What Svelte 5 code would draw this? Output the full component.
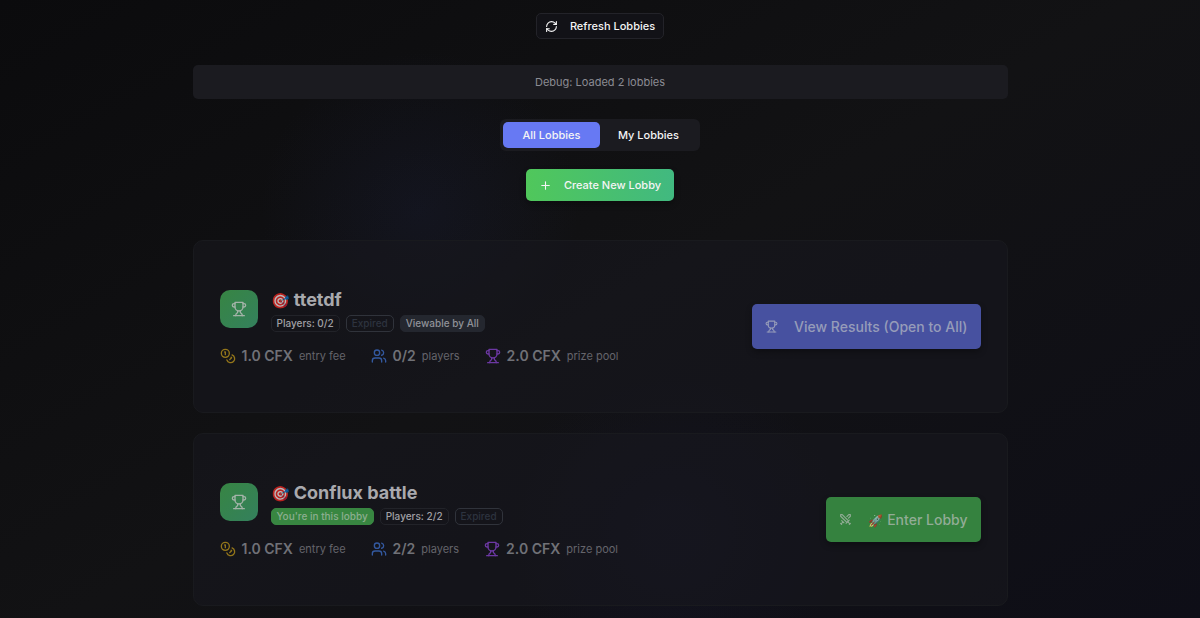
<script>
    let tab = 'all';

    const lobbies = [
        {
            name: 'ttetdf',
            players: '0/2',
            joined: false,
            viewable: true,
            fee: '1.0',
            prize: '2.0',
        },
        {
            name: 'Conflux battle',
            players: '2/2',
            joined: true,
            viewable: false,
            fee: '1.0',
            prize: '2.0',
        },
    ];

    $: shown = tab == 'all' ? lobbies : lobbies.filter((lobby) => lobby.joined);
</script>

<svelte:head>
    <title>Lobbies</title>
</svelte:head>

{#snippet trophy()}
    <svg class="icon" viewBox="0 0 24 24" aria-hidden="true">
        <path d="M6 9H4.500a2.500 2.500 0 0 1 0-5H6" />
        <path d="M18 9h1.500a2.500 2.500 0 0 0 0-5H18" />
        <path d="M4 22h16" />
        <path d="M10 14.660V17c0 .55-.47.98-.97 1.210C7.850 18.750 7 20.240 7 22" />
        <path d="M14 14.660V17c0 .55.47.98.97 1.210C16.150 18.750 17 20.240 17 22" />
        <path d="M18 2H6v7a6 6 0 0 0 12 0V2Z" />
    </svg>
{/snippet}

<main>
    <button class="btn refresh">
        <svg class="icon" viewBox="0 0 24 24" aria-hidden="true">
            <path d="M3 12a9 9 0 0 1 9-9 9.750 9.750 0 0 1 6.740 2.740L21 8" />
            <path d="M21 3v5h-5" />
            <path d="M21 12a9 9 0 0 1-9 9 9.750 9.750 0 0 1-6.740-2.740L3 16" />
            <path d="M8 16H3v5" />
        </svg>
        Refresh Lobbies
    </button>

    <p class="debug">Debug: Loaded {lobbies.length} lobbies</p>

    <div class="tabs">
        <button class:active={tab == 'all'} on:click={() => (tab = 'all')}>All Lobbies</button>
        <button class:active={tab == 'mine'} on:click={() => (tab = 'mine')}>My Lobbies</button>
    </div>

    <button class="btn create">
        <svg class="icon" viewBox="0 0 24 24" aria-hidden="true">
            <path d="M5 12h14" />
            <path d="M12 5v14" />
        </svg>
        Create New Lobby
    </button>

    <div class="list">
        {#each shown as lobby}
            <article class="card">
                <div class="info">
                    <div class="head">
                        <div class="avatar">{@render trophy()}</div>
                        <div>
                            <h3><span class="emoji">🎯</span> {lobby.name}</h3>
                            <div class="badges">
                                {#if lobby.joined}
                                    <span class="badge joined">You're in this lobby</span>
                                {/if}
                                <span class="badge">Players: {lobby.players}</span>
                                <span class="badge expired">Expired</span>
                                {#if lobby.viewable}
                                    <span class="badge viewable">Viewable by All</span>
                                {/if}
                            </div>
                        </div>
                    </div>
                    <div class="stats">
                        <div class="stat coins">
                            <svg class="icon" viewBox="0 0 24 24" aria-hidden="true">
                                <circle cx="8" cy="8" r="6" />
                                <path d="M18.090 10.370A6 6 0 1 1 10.340 18" />
                                <path d="M7 6h1v4" />
                                <path d="m16.710 13.880.7.710-2.820 2.820" />
                            </svg>
                            <strong>{lobby.fee} CFX</strong>
                            <span>entry fee</span>
                        </div>
                        <div class="stat users">
                            <svg class="icon" viewBox="0 0 24 24" aria-hidden="true">
                                <path d="M16 21v-2a4 4 0 0 0-4-4H6a4 4 0 0 0-4 4v2" />
                                <circle cx="9" cy="7" r="4" />
                                <path d="M22 21v-2a4 4 0 0 0-3-3.870" />
                                <path d="M16 3.130a4 4 0 0 1 0 7.750" />
                            </svg>
                            <strong>{lobby.players}</strong>
                            <span>players</span>
                        </div>
                        <div class="stat prize">
                            {@render trophy()}
                            <strong>{lobby.prize} CFX</strong>
                            <span>prize pool</span>
                        </div>
                    </div>
                </div>

                {#if lobby.joined}
                    <button class="btn action enter">
                        <svg class="icon" viewBox="0 0 24 24" aria-hidden="true">
                            <path d="M14.500 17.500 3 6V3h3l11.500 11.500" />
                            <path d="m13 19 6-6" />
                            <path d="m16 16 4 4" />
                            <path d="m19 21 2-2" />
                            <path d="M14.500 6.500 18 3h3v3l-3.500 3.500" />
                            <path d="m5 14 4 4" />
                            <path d="m7 17-3 3" />
                            <path d="m3 19 2 2" />
                        </svg>
                        <span><span class="emoji">🚀</span> Enter Lobby</span>
                    </button>
                {:else}
                    <button class="btn action">
                        {@render trophy()}
                        View Results (Open to All)
                    </button>
                {/if}
            </article>
        {/each}
    </div>
</main>

<style>
    :global(body) {
        min-height: 100vh;
        background:
            radial-gradient(circle at 35% 34%, rgba(40, 50, 110, 0.14), transparent 160px),
            radial-gradient(circle at 56% 86%, rgba(40, 40, 110, 0.12), transparent 170px),
            linear-gradient(150deg, #0b0b0d 0%, #121214 50%, #0e0e17 100%);
        font-family: Inter, "Liberation Sans", sans-serif;
    }

    main {
        display: flex;
        flex-direction: column;
        align-items: center;
        max-width: 815px;
        margin: 0 auto;
        padding: 13px 16px;
    }

    button {
        border: 0;
        font-family: inherit;
        cursor: pointer;
    }

    .icon {
        display: block;
        flex: none;
        width: 13px;
        height: 13px;
        fill: none;
        stroke: currentColor;
        stroke-width: 2;
        stroke-linecap: round;
        stroke-linejoin: round;
    }

    .btn {
        display: flex;
        align-items: center;
        gap: 12px;
        border-radius: 5px;
        font-size: 11px;
        font-weight: 500;
        white-space: nowrap;
        color: #f4f4f5;
    }

    .refresh {
        height: 26px;
        padding: 0 8px;
        border: 1px solid #232329;
        background: #121217;
    }

    .debug {
        box-sizing: border-box;
        width: 100%;
        margin: 26px 0 20px;
        padding: 10px;
        border-radius: 5px;
        background: #1b1b20;
        font-size: 11px;
        line-height: 14px;
        text-align: center;
        color: #8b8b93;
    }

    .tabs {
        display: grid;
        grid-template-columns: 1fr 1fr;
        padding: 3px;
        border-radius: 6px;
        background: #1b1b20;
    }

    .tabs button {
        height: 26px;
        padding: 0 18px;
        border-radius: 5px;
        background: none;
        font-size: 11px;
        font-weight: 500;
        color: #f4f4f5;
    }

    .tabs button.active {
        background: #6779f3;
    }

    .create {
        height: 32px;
        margin-top: 18px;
        padding: 0 13px;
        background: linear-gradient(90deg, #50c75b, #41b980);
        box-shadow: 0 3px 6px rgba(0, 0, 0, 0.3);
    }

    .list {
        display: flex;
        flex-direction: column;
        gap: 20px;
        width: 100%;
        margin-top: 39px;
    }

    .card {
        display: flex;
        justify-content: space-between;
        align-items: center;
        padding: 45px 26px 46px;
        border: 1px solid #191a1e;
        border-radius: 10px;
        background: rgba(24, 24, 30, 0.6);
    }

    .head {
        display: flex;
        align-items: center;
        gap: 13px;
    }

    .avatar {
        display: grid;
        place-items: center;
        width: 38px;
        height: 38px;
        border-radius: 10px;
        background: linear-gradient(135deg, #378543, #34805d);
        color: #a3b3a8;
    }

    .avatar .icon {
        width: 16px;
        height: 16px;
    }

    h3 {
        margin: 0 0 1px;
        font-size: 18px;
        font-weight: 700;
        line-height: 28px;
        color: #a9a9ad;
    }

    .emoji {
        font-size: 12px;
        line-height: 1;
        opacity: 0.7;
    }

    h3 .emoji {
        font-size: 15px;
    }

    .badges {
        display: flex;
        gap: 6px;
    }

    .badge {
        padding: 0 5px;
        border: 1px solid #222329;
        border-radius: 5px;
        font-size: 10px;
        font-weight: 500;
        line-height: 15px;
        color: #a0a0a5;
    }

    .badge.expired {
        border-color: #30333b;
        color: #2d333f;
    }

    .badge.viewable {
        border-color: #24272f;
        background: #24272f;
        color: #909299;
    }

    .badge.joined {
        border-color: #388641;
        background: #388641;
        color: #8cae90;
    }

    .stats {
        display: flex;
        gap: 25px;
        margin-top: 14px;
    }

    .stat {
        display: flex;
        align-items: center;
        gap: 6px;
        font-size: 11px;
        line-height: 20px;
        color: #64646b;
    }

    .stat .icon {
        width: 16px;
        height: 16px;
    }

    .stat strong {
        font-size: 14px;
        font-weight: 600;
        color: #707177;
    }

    .coins .icon {
        stroke: #94761a;
    }

    .users .icon {
        stroke: #3359a0;
    }

    .prize .icon {
        stroke: #6c38a3;
    }

    .action {
        gap: 16px;
        height: 45px;
        padding: 0 13px;
        background: #4751a0;
        box-shadow: 0 3px 6px rgba(0, 0, 0, 0.3);
        font-size: 14px;
        color: #969cb9;
    }

    .enter {
        background: #35823f;
        color: #92ac96;
    }
</style>
